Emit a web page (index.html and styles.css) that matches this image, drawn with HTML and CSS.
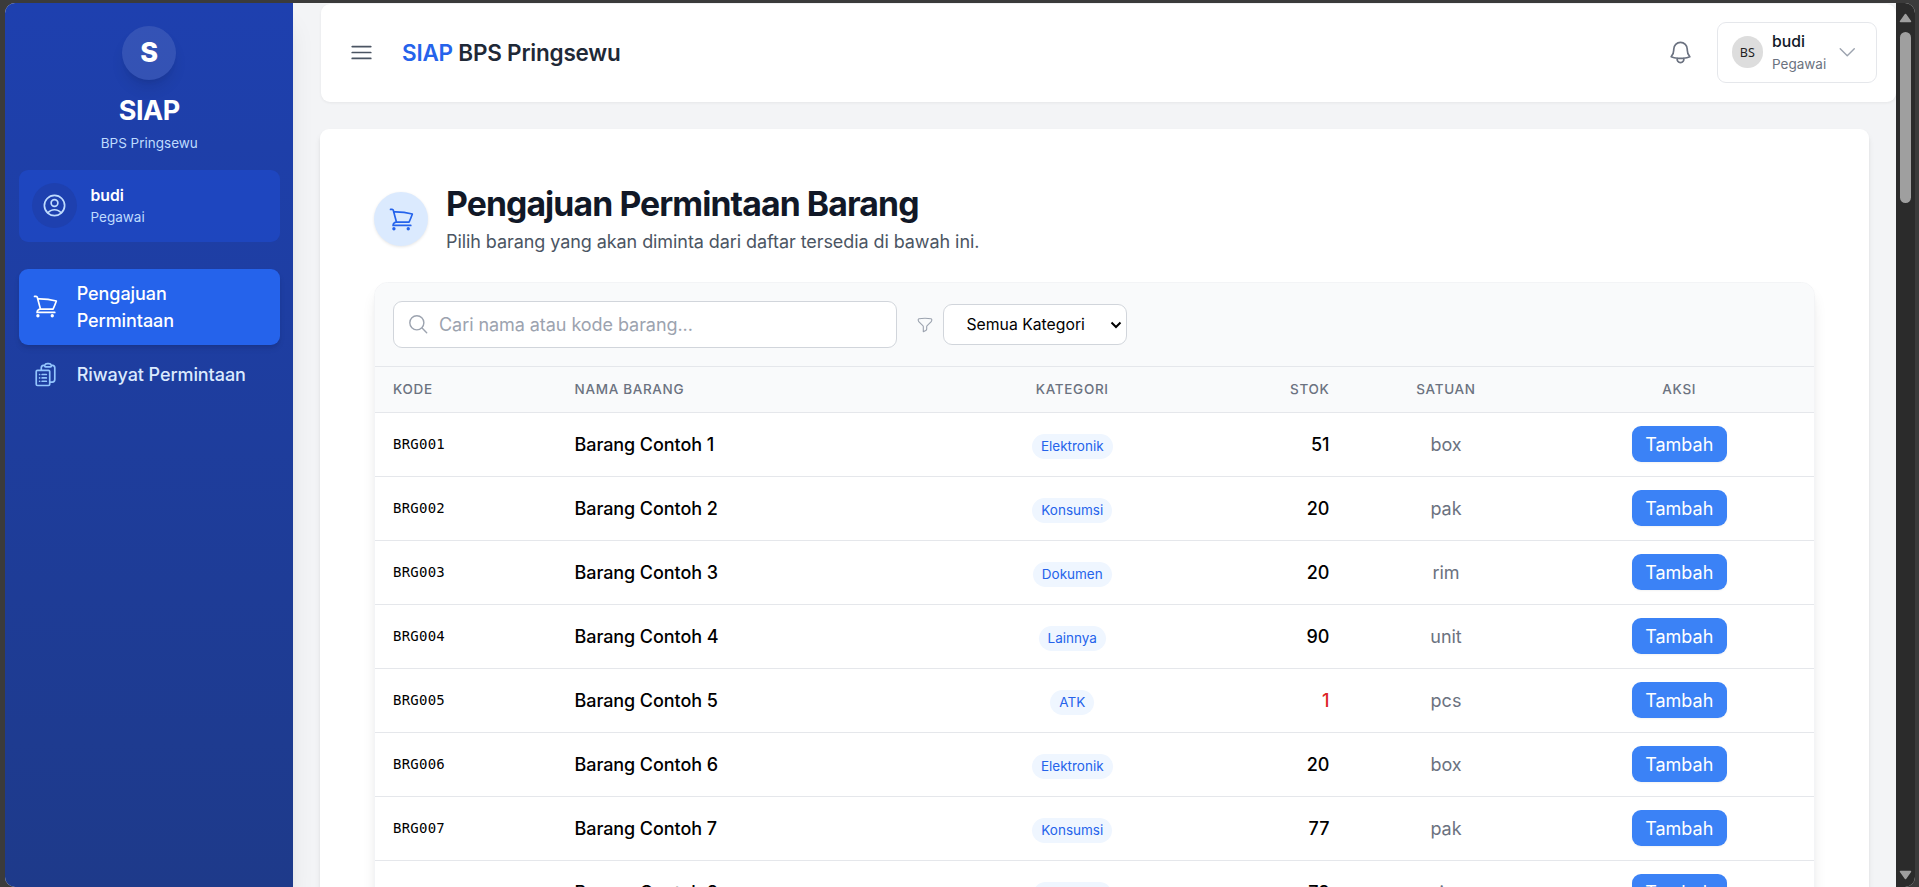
FILE: index.html
```html
<!DOCTYPE html>
<html lang="id">
<head>
<meta charset="utf-8">
<title>SIAP BPS Pringsewu</title>
<link rel="stylesheet" href="styles.css">
</head>
<body>
<svg class="sprite" aria-hidden="true">
  <symbol id="cart" viewBox="0 0 24 24"><path d="M2.25 3h1.386c.51 0 .955.343 1.087.835l.383 1.437M7.5 14.25a3 3 0 0 0-3 3h15.75m-12.75-3h11.218c1.121-2.3 2.1-4.684 2.924-7.138a60.114 60.114 0 0 0-16.536-1.84M7.5 14.25 5.106 5.272M6 20.25a.75.75 0 1 1-1.5 0 .75.75 0 0 1 1.5 0Zm12.75 0a.75.75 0 1 1-1.5 0 .75.75 0 0 1 1.5 0Z"/></symbol>
  <symbol id="user" viewBox="0 0 24 24"><path d="M17.982 18.725A7.488 7.488 0 0 0 12 15.75a7.488 7.488 0 0 0-5.982 2.975m11.963 0a9 9 0 1 0-11.963 0m11.963 0A8.966 8.966 0 0 1 12 21a8.966 8.966 0 0 1-5.982-2.275M15 9.75a3 3 0 1 1-6 0 3 3 0 0 1 6 0Z"/></symbol>
  <symbol id="clipboard" viewBox="0 0 24 24"><path d="M9 12h3.75M9 15h3.75M9 18h3.75m3 .75H18a2.25 2.25 0 0 0 2.25-2.25V6.108c0-1.135-.845-2.098-1.976-2.192a48.424 48.424 0 0 0-1.123-.08m-5.801 0c-.065.21-.1.433-.1.664 0 .414.336.75.75.75h4.5a.75.75 0 0 0 .75-.75 2.25 2.25 0 0 0-.1-.664m-5.8 0A2.251 2.251 0 0 1 13.5 2.25H15c1.012 0 1.867.668 2.15 1.586m-5.8 0c-.376.023-.75.05-1.124.08C9.095 4.01 8.25 4.973 8.25 6.108V8.25m0 0H4.875c-.621 0-1.125.504-1.125 1.125v11.25c0 .621.504 1.125 1.125 1.125h9.75c.621 0 1.125-.504 1.125-1.125V9.375c0-.621-.504-1.125-1.125-1.125H8.25ZM6.75 12h.008v.008H6.75V12Zm0 3h.008v.008H6.75V15Zm0 3h.008v.008H6.75V18Z"/></symbol>
  <symbol id="bars" viewBox="0 0 24 24"><path d="M3.75 6.75h16.5M3.75 12h16.5m-16.5 5.25h16.5"/></symbol>
  <symbol id="bell" viewBox="0 0 24 24"><path d="M14.857 17.082a23.848 23.848 0 0 0 5.454-1.31A8.967 8.967 0 0 1 18 9.75V9A6 6 0 0 0 6 9v.75a8.967 8.967 0 0 1-2.312 6.022c1.733.64 3.56 1.085 5.455 1.31m5.714 0a24.255 24.255 0 0 1-5.714 0m5.714 0a3 3 0 1 1-5.714 0"/></symbol>
  <symbol id="chevron" viewBox="0 0 24 24"><path d="m19.5 8.25-7.5 7.5-7.5-7.5"/></symbol>
  <symbol id="search" viewBox="0 0 24 24"><path d="m21 21-5.197-5.197m0 0A7.5 7.5 0 1 0 5.196 5.196a7.5 7.5 0 0 0 10.607 10.607Z"/></symbol>
  <symbol id="funnel" viewBox="0 0 24 24"><path d="M12 3c2.755 0 5.455.232 8.083.678.533.09.917.556.917 1.096v1.044a2.25 2.25 0 0 1-.659 1.591l-5.432 5.432a2.25 2.25 0 0 0-.659 1.591v2.927a2.25 2.25 0 0 1-1.244 2.013L9.75 21v-6.568a2.25 2.25 0 0 0-.659-1.591L3.659 7.409A2.25 2.25 0 0 1 3 5.818V4.774c0-.54.384-1.006.917-1.096A48.32 48.32 0 0 1 12 3Z"/></symbol>
</svg>

<div class="window">
  <aside class="sidebar">
    <div class="brand">
      <div class="brand-logo">S</div>
      <div class="brand-name">SIAP</div>
      <div class="brand-org">BPS Pringsewu</div>
    </div>
    <div class="profile">
      <div class="profile-icon"><svg class="icon"><use href="#user"/></svg></div>
      <div>
        <div class="profile-name">budi</div>
        <div class="profile-role">Pegawai</div>
      </div>
    </div>
    <nav class="nav">
      <a class="nav-item active"><svg class="icon"><use href="#cart"/></svg><span>Pengajuan Permintaan</span></a>
      <a class="nav-item"><svg class="icon"><use href="#clipboard"/></svg><span>Riwayat Permintaan</span></a>
    </nav>
  </aside>

  <div class="page">
    <header class="topbar">
      <svg class="icon menu"><use href="#bars"/></svg>
      <div class="title"><span class="accent">SIAP</span> BPS Pringsewu</div>
      <svg class="icon bell"><use href="#bell"/></svg>
      <div class="account">
        <div class="avatar">BS</div>
        <div class="account-text">
          <div class="account-name">budi</div>
          <div class="account-role">Pegawai</div>
        </div>
        <svg class="icon icon-sm chevron"><use href="#chevron"/></svg>
      </div>
    </header>

    <main class="card">
      <div class="heading">
        <div class="heading-icon"><svg class="icon"><use href="#cart"/></svg></div>
        <div>
          <h1>Pengajuan Permintaan Barang</h1>
          <p>Pilih barang yang akan diminta dari daftar tersedia di bawah ini.</p>
        </div>
      </div>

      <section class="panel">
        <div class="toolbar">
          <div class="search"><svg class="icon icon-sm"><use href="#search"/></svg><span>Cari nama atau kode barang...</span></div>
          <svg class="icon funnel"><use href="#funnel"/></svg>
          <div class="select"><span>Semua Kategori</span><svg class="caret" viewBox="0 0 12 8"><path d="M1.5 1.5 6 6l4.500-4.500"/></svg></div>
        </div>
        <table>
          <colgroup><col class="c-code"><col class="c-name"><col class="c-cat"><col class="c-stock"><col class="c-unit"><col class="c-act"></colgroup>
          <thead>
            <tr><th>KODE</th><th>NAMA BARANG</th><th class="center">KATEGORI</th><th class="right">STOK</th><th class="center">SATUAN</th><th class="center">AKSI</th></tr>
          </thead>
          <tbody>
            <tr><td class="code">BRG001</td><td class="name">Barang Contoh 1</td><td class="center"><span class="badge">Elektronik</span></td><td class="stock">51</td><td class="unit">box</td><td class="action"><button>Tambah</button></td></tr>
            <tr><td class="code">BRG002</td><td class="name">Barang Contoh 2</td><td class="center"><span class="badge">Konsumsi</span></td><td class="stock">20</td><td class="unit">pak</td><td class="action"><button>Tambah</button></td></tr>
            <tr><td class="code">BRG003</td><td class="name">Barang Contoh 3</td><td class="center"><span class="badge">Dokumen</span></td><td class="stock">20</td><td class="unit">rim</td><td class="action"><button>Tambah</button></td></tr>
            <tr><td class="code">BRG004</td><td class="name">Barang Contoh 4</td><td class="center"><span class="badge">Lainnya</span></td><td class="stock">90</td><td class="unit">unit</td><td class="action"><button>Tambah</button></td></tr>
            <tr><td class="code">BRG005</td><td class="name">Barang Contoh 5</td><td class="center"><span class="badge">ATK</span></td><td class="stock low">1</td><td class="unit">pcs</td><td class="action"><button>Tambah</button></td></tr>
            <tr><td class="code">BRG006</td><td class="name">Barang Contoh 6</td><td class="center"><span class="badge">Elektronik</span></td><td class="stock">20</td><td class="unit">box</td><td class="action"><button>Tambah</button></td></tr>
            <tr><td class="code">BRG007</td><td class="name">Barang Contoh 7</td><td class="center"><span class="badge">Konsumsi</span></td><td class="stock">77</td><td class="unit">pak</td><td class="action"><button>Tambah</button></td></tr>
            <tr><td class="code">BRG008</td><td class="name">Barang Contoh 8</td><td class="center"><span class="badge">Dokumen</span></td><td class="stock">78</td><td class="unit">rim</td><td class="action"><button>Tambah</button></td></tr>
          </tbody>
        </table>
      </section>
    </main>
  </div>

  <div class="scrollbar">
    <svg class="arrow" viewBox="0 0 13 10"><path d="M6.500 1.500 11.500 8.500h-10Z"/></svg>
    <div class="thumb"></div>
    <svg class="arrow down" viewBox="0 0 13 10"><path d="M6.500 8.500 11.500 1.500h-10Z"/></svg>
  </div>
</div>
</body>
</html>
```
FILE: styles.css
```css
* { box-sizing: border-box; }

html { font-size: 18px; }

body {
  margin: 0;
  height: 887px;
  overflow: hidden;
  padding: 3px 4px 0 5px;
  background: #3b3b3b;
  font-family: Inter, "Liberation Sans", sans-serif;
  line-height: 1.5;
  color: #000;
}

.sprite { display: none; }

.icon {
  width: 27px;
  height: 27px;
  flex: none;
  fill: none;
  stroke: currentColor;
  stroke-width: 1.5;
  stroke-linecap: round;
  stroke-linejoin: round;
}
.icon-sm { width: 22.5px; height: 22.5px; }

.window {
  display: flex;
  height: 884px;
  border-radius: 10px;
  overflow: hidden;
  background: #f3f4f6;
}

/* Sidebar */
.sidebar {
  width: 288px;
  flex: none;
  padding: 22.5px 13.5px 0 14px;
  background: linear-gradient(to bottom, #1e40af, #1e3a8a);
  box-shadow: 0 20px 25px -5px rgba(0, 0, 0, .1), 0 8px 10px -6px rgba(0, 0, 0, .1);
  color: #fff;
  position: relative;
}
.brand { display: flex; flex-direction: column; align-items: center; }
.brand-logo {
  width: 54px;
  height: 54px;
  padding-top: 1px;
  border-radius: 50%;
  display: grid;
  place-items: center;
  background: rgba(255, 255, 255, .1);
  box-shadow: 0 10px 15px -3px rgba(0, 0, 0, .1), 0 4px 6px -4px rgba(0, 0, 0, .1);
  font-size: 27px;
  font-weight: 800;
}
.brand-name { margin-top: 13px; font-size: 27px; line-height: 36px; font-weight: 700; letter-spacing: -.018em; }
.brand-org { margin-top: 5px; font-size: 13.5px; line-height: 18px; color: #bfdbfe; }

.profile {
  display: flex;
  align-items: center;
  gap: 13.5px;
  height: 72px;
  margin-top: 18px;
  padding: 0 13px;
  border-radius: 9px;
  background: rgba(29, 78, 216, .5);
}
.profile-icon {
  width: 45px;
  height: 45px;
  border-radius: 50%;
  display: grid;
  place-items: center;
  background: #1e40af;
  color: #bfdbfe;
}
.profile-name { font-size: 15.75px; line-height: 22.5px; font-weight: 600; }
.profile-role { font-size: 13.5px; line-height: 18px; color: #bfdbfe; margin-top: 1px; }

.nav { display: flex; flex-direction: column; gap: 4.5px; margin-top: 27px; }
.nav-item {
  display: flex;
  align-items: center;
  gap: 18px;
  padding: 11.25px 12.75px;
  border-radius: 9px;
  font-weight: 500;
  line-height: 27px;
  letter-spacing: -.08px;
  color: #dbeafe;
}
.nav-item .icon { color: #93c5fd; }
.nav-item.active { background: #2563eb; color: #fff; box-shadow: 0 4px 6px -1px rgba(0, 0, 0, .1), 0 2px 4px -2px rgba(0, 0, 0, .1); }
.nav-item.active .icon { color: #fff; }

/* Page */
.page { flex: 1; min-width: 0; padding-left: 27px; }

.topbar {
  display: flex;
  align-items: center;
  height: 98px;
  margin-top: 1px;
  margin-left: 1px;
  padding: 0 19px 2px 27px;
  border-radius: 9px;
  background: #fff;
  box-shadow: 0 1px 3px rgba(0, 0, 0, .06);
}
.menu { color: #4b5563; }
.title { margin: 1px auto 0 27px; font-size: 22.5px; font-weight: 600; letter-spacing: -.22px; color: #1f2937; }
.accent { color: #2563eb; }
.bell { color: #6b7280; margin-right: 23px; }
.account {
  display: flex;
  align-items: center;
  width: 160px;
  height: 61px;
  padding-left: 13.5px;
  border: 1px solid #e5e7eb;
  border-radius: 9px;
}
.avatar {
  width: 31.5px;
  height: 31.5px;
  border-radius: 50%;
  display: grid;
  place-items: center;
  background: #ddd;
  color: #222;
  font: 12.5px "Noto Sans", sans-serif;
}
.account-text { margin-left: 9px; }
.account-name { font-size: 15.75px; line-height: 22.5px; font-weight: 500; color: #111827; }
.account-role { font-size: 13.5px; line-height: 18px; color: #6b7280; margin-top: 1px; }
.chevron { color: #9ca3af; margin-left: 10px; }

.card {
  height: 1200px;
  margin: 27px 27px 0 0;
  padding: 54px;
  border-radius: 9px;
  background: #fff;
  box-shadow: 0 4px 6px -1px rgba(0, 0, 0, .1), 0 2px 4px -2px rgba(0, 0, 0, .1);
}
.heading { display: flex; align-items: center; gap: 18px; }
.heading-icon {
  width: 54px;
  height: 54px;
  border-radius: 50%;
  display: grid;
  place-items: center;
  background: #dbeafe;
  color: #2563eb;
  box-shadow: 0 1px 3px rgba(0, 0, 0, .1);
}
h1 { margin: 0; padding-top: 1px; font-size: 33.75px; line-height: 40.5px; font-weight: 700; letter-spacing: -.9px; color: #111827; }
p { margin: 3.5px 0 0; color: #4b5563; line-height: 27px; letter-spacing: -.075px; }

.panel {
  margin-top: 27px;
  border: 1px solid #f3f4f6;
  border-radius: 13.5px;
  overflow: hidden;
  box-shadow: 0 10px 15px -3px rgba(0, 0, 0, .1), 0 4px 6px -4px rgba(0, 0, 0, .1);
}
.toolbar {
  display: flex;
  align-items: center;
  height: 84px;
  padding-left: 18px;
  background: #f9fafb;
  border-bottom: 1px solid #e5e7eb;
}
.search {
  display: flex;
  align-items: center;
  gap: 10px;
  width: 504px;
  height: 47px;
  padding-left: 12.5px;
  border: 1px solid #d1d5db;
  border-radius: 9px;
  background: #fff;
  color: #9ca3af;
  letter-spacing: -.06px;
}
.funnel { width: 18px; height: 18px; margin: 0 9.500px 0 18.500px; color: #9ca3af; }
.select {
  display: flex;
  align-items: center;
  justify-content: space-between;
  width: 184px;
  height: 41px;
  padding: 0 4px 0 22.500px;
  border: 1px solid #d1d5db;
  border-radius: 9px;
  background: #fff;
  font-size: 15.75px;
}
.caret { width: 12px; height: 8px; fill: none; stroke: #000; stroke-width: 2; }

table { width: 100%; table-layout: fixed; border-collapse: separate; border-spacing: 0; }
.c-code { width: 181.5px; }
.c-name { width: 430px; }
.c-cat { width: 171.5px; }
.c-stock { width: 189.5px; }
.c-unit { width: 197px; }
th {
  height: 46px;
  padding: 0 18px;
  background: #f9fafb;
  border-bottom: 1px solid #e5e7eb;
  text-align: left;
  font-size: 13.5px;
  font-weight: 500;
  letter-spacing: .05em;
  color: #6b7280;
}
td { height: 64px; padding: 0 18px; border-bottom: 1px solid #e5e7eb; }
.center { text-align: center; }
.right { text-align: right; }
.code { font-family: "DejaVu Sans Mono", monospace; font-size: 14px; letter-spacing: .24px; }
.name { font-weight: 500; letter-spacing: -.08px; }
.stock { text-align: right; font-weight: 500; }
.low { color: #dc2626; }
.unit { text-align: center; color: #6b7280; }
.action { padding-bottom: 2px; text-align: center; }
.badge {
  display: inline-block;
  padding: 3px 9px 4px;
  border-radius: 999px;
  background: #eff6ff;
  color: #2563eb;
  font-size: 13.5px;
  line-height: 18px;
}
button {
  width: 95px;
  height: 36px;
  padding: 1px 0 0;
  border: 0;
  border-radius: 9px;
  background: #3b82f6;
  color: #fff;
  font: 18px Inter, sans-serif;
  box-shadow: 0 1px 2px rgba(0, 0, 0, .05);
}

/* Window scrollbar */
.scrollbar {
  display: flex;
  flex-direction: column;
  align-items: center;
  width: 19px;
  flex: none;
  padding: 10px 0 7px;
  background: #2b2b2b;
}
.thumb { width: 11px; height: 171px; margin-top: 9px; border-radius: 6px; background: #9f9f9f; }
.arrow { width: 13px; height: 10px; fill: #9f9f9f; stroke: #9f9f9f; stroke-width: 1.500; stroke-linejoin: round; }
.down { margin-top: auto; }
```
